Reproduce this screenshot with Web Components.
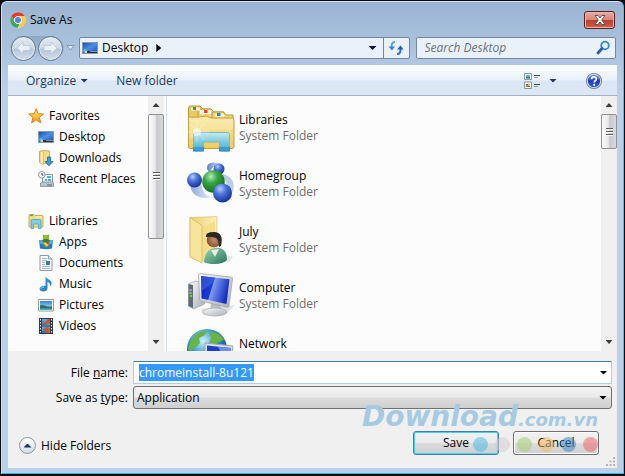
<!DOCTYPE html>
<html lang="en">
<head>
<meta charset="utf-8">
<title>Save As</title>
<style>
  html, body { margin: 0; height: 100%; }
  body {
    background: #0c0c10;
    color: #000;
    font: 12px/16px "Open Sans", "Noto Sans", sans-serif;
    overflow: hidden;
  }
</style>
</head>
<body>
<save-dialog></save-dialog>

<script>
const ICONS = {
  chrome: `<svg viewBox="0 0 48 48"><circle cx="24" cy="24" r="23" fill="#fff"/><path d="M4 12A23.500 23.500 0 0 1 44.500 12.500H24A11.500 11.500 0 0 0 13.500 28Z" fill="#e2402f"/><path d="M44.500 12.500A23.500 23.500 0 0 1 23 47.500L34 29.700A11.500 11.500 0 0 0 24 12.500Z" fill="#f9cc3c"/><path d="M4 12L14 29.700A11.500 11.500 0 0 0 30 34L23 47.500A23.500 23.500 0 0 1 4 12Z" fill="#3ba757"/><circle cx="24" cy="24" r="11.500" fill="#fff"/><circle cx="24" cy="24" r="9" fill="#4a84e4"/></svg>`,
  desktop: `<svg viewBox="0 0 16 16"><defs><linearGradient id="g" x2="1" y2="1"><stop offset="0" stop-color="#1c51ab"/><stop offset=".5" stop-color="#4f8ee6"/><stop offset="1" stop-color="#2455b0"/></linearGradient></defs><rect y="2" width="16" height="12" fill="#8e9aaa"/><rect x="1" y="3" width="14" height="9" fill="url(#g)"/><rect x="1" y="11" width="14" height="2" fill="#252d3c"/><path d="M8 11h7v1H8z" fill="#8792a0"/><circle cx="3" cy="11" r="2" fill="#49b9e8"/><path d="M3 10v1h1v-1z" fill="#9fd349"/><path d="M3 11h2v2H3z" fill="#f9d130"/><path d="M1 10h1v1H1z" fill="#e0764a"/></svg>`,
  refresh: `<svg viewBox="0 0 16 16"><path d="M7 2C4 2 3.500 4 3.600 7" fill="none" stroke="#4aa6e4" stroke-width="2"/><path d="M.500 6.500h6.500L4 10.500z" fill="#3d83d2"/><path d="M9 14c3 0 3.600-2 3.500-5" fill="none" stroke="#3273c8" stroke-width="2"/><path d="M9 9.500h6.500L12.500 5.500z" fill="#275db4"/></svg>`,
  search: `<svg viewBox="0 0 16 16"><circle cx="10" cy="5.500" r="3.800" fill="#e4f3fd" stroke="#2e8bd1" stroke-width="1.800"/><path d="M7 8.500L3 13" stroke="#275db4" stroke-width="2.800" stroke-linecap="round"/></svg>`,
  views: `<svg viewBox="0 0 16 16"><path d="M.500.500h7v6h-7zM.500 9h7v6.500h-7z" fill="#fff" stroke="#8496ae"/><path d="M2 2h4v2H2z" fill="#61b4dc"/><path d="M2 4h4v1.500H2z" fill="#237064"/><path d="M2 11h2v1.500H2z" fill="#cf3f32"/><path d="M4 10.500h2V13H4z" fill="#e9c130"/><path d="M2 12.500h2V14H2z" fill="#4f9f3d"/><path d="M4 13h2v1H4z" fill="#3a5fc5"/><path d="M10 2.500h6M10 11.500h6" stroke="#394b68"/><path d="M10 4.500h4M10 13.500h4" stroke="#8898b1"/></svg>`,
  help: `<svg viewBox="0 0 16 16"><defs><linearGradient id="g" x2="0" y2="1"><stop offset="0" stop-color="#6f94e9"/><stop offset=".5" stop-color="#1b40ba"/><stop offset="1" stop-color="#2960d6"/></linearGradient></defs><circle cx="8" cy="8" r="8" fill="#6f7a8d"/><circle cx="8" cy="8" r="7.200" fill="#dde2eb"/><circle cx="8" cy="8" r="6.200" fill="url(#g)"/><path d="M5.600 6.200C5.700 3.200 10.500 3.300 10.400 6c0 1.600-2.200 1.700-2.200 3.500" fill="none" stroke="#fff" stroke-width="1.700"/><circle cx="8.200" cy="11.800" r="1.100" fill="#fff"/></svg>`,
  star: `<svg viewBox="0 0 16 16"><defs><linearGradient id="g" x2="0" y2="1"><stop offset="0" stop-color="#fff08a"/><stop offset=".55" stop-color="#ffc338"/><stop offset="1" stop-color="#f28a1c"/></linearGradient></defs><path d="M8.200.800l1.900 5 5.400.200-4.200 3.400 1.500 5.400-4.700-3-4.500 3 1.400-5.300L.700 6l5.500-.200z" fill="url(#g)" stroke="#e17a1b" stroke-linejoin="round"/></svg>`,
  downloads: `<svg viewBox="0 0 16 16"><path d="M1.500 1.500l4-1 6 .500v12l-6 .500-4-1z" fill="#f5dc84" stroke="#d3ae50"/><path d="M5.500 2v13L2 13V1z" fill="#fbebad" stroke="#c9a548" stroke-width=".6"/><path d="M9.500 7h3v4.500h2.500L11 15.800 7 11.500h2.500z" fill="#3a9be4" stroke="#1766ae" stroke-width=".8"/></svg>`,
  recent: `<svg viewBox="0 0 16 16"><path d="M4.500 3.500h10v8h-10z" fill="#f3f6f8" stroke="#8d979f"/><path d="M2.500 12l2-1h10l1 1v3.500h-13z" fill="#bcc3c8" stroke="#848d94" stroke-width=".8"/><path d="M9 5h4v2H9zM7 8h2v2H7zM10 8h3v2h-3z" fill="#4db0d8"/><path d="M9 14h5" stroke="#5b6870"/><circle cx="3.800" cy="3.800" r="3.300" fill="#f4f7f9" stroke="#8f9ba5"/><path d="M4 2v2h1.500" fill="none" stroke="#39444d"/></svg>`,
  libraries: `<svg viewBox="0 0 16 16"><path d="M1 2.500q0-1 1-1h4l1 1h7q1 0 1 1V14H1z" fill="#f6dc80" stroke="#d1ab4a"/><path d="M2 2.500h3" stroke="#5aa743" stroke-width="1.200"/><path d="M8 4h6" stroke="#fff7d0"/><path d="M3 8q0-1.500 1.500-1.500h7Q13 6.500 13 8v7.500h-2.500V11h-5v4.500H3z" fill="#7fccec" stroke="#3f9fd1" stroke-width=".8"/></svg>`,
  apps: `<svg viewBox="0 0 16 16"><circle cx="8" cy="4" r="3.200" fill="#94bb2b"/><path d="M5 .800l1 1.500M11 .800L10 2.300" stroke="#6f941b"/><path d="M1 6h14l-1 8.500Q8 16 2 14.500z" fill="#2d78b8"/><path d="M1 6h14l-.400 3.500Q8 11.500 1.400 9.500z" fill="#5aa9dc"/><path d="M4 6.500c1-2 7-2 8 0l-2 2H6z" fill="#3e7d2b"/><path d="M5.500 9.500L8 8l3 3-2.500 2z" fill="#efcc26"/><path d="M7.500 8.500l3-1v3z" fill="#c43b34"/><path d="M6 11l2 2" stroke="#54ad3c" stroke-width="1.500"/></svg>`,
  documents: `<svg viewBox="0 0 16 16"><path d="M2 .500h8.500L14 4v11.500H2z" fill="#fbfcfd" stroke="#8d9aa8"/><path d="M10.500.500V4H14" fill="#dbe5ee" stroke="#8d9aa8"/><path d="M4 3.500h5M4 5.500h5M4 7.500h3M4 9.500h3M4 11.500h8M4 13.500h8" stroke="#a4b5c8"/><path d="M8 6h4v4H8z" fill="#2f74b8"/><path d="M8 8.500h4V10H8z" fill="#3b927c"/></svg>`,
  music: `<svg viewBox="0 0 16 16"><defs><linearGradient id="g" x2="1" y2="1"><stop offset="0" stop-color="#4bb5f0"/><stop offset="1" stop-color="#1866b5"/></linearGradient></defs><path d="M7.500.500C9 3.500 14 4 13.500 7.500c0 1-.600 2-1.500 3 .600-3-1-4-2.500-4.500V12c0 2-1.500 3.500-4 3.500C3 15.500 1.500 14.500 1.500 13c0-2.500 3.500-4 6-3z" fill="url(#g)"/><path d="M3 12.500c.500-1 1.500-1.500 3-1.600" stroke="#9bdbfa" fill="none"/></svg>`,
  pictures: `<svg viewBox="0 0 16 16"><defs><linearGradient id="g" x2="0" y2="1"><stop offset="0" stop-color="#2f85cc"/><stop offset="1" stop-color="#c4ecf4"/></linearGradient></defs><path d="M.500 2.500h15v11.500H.500z" fill="#fff" stroke="#8d99a6"/><path d="M2 4h12v8.500H2z" fill="url(#g)"/><path d="M2 8.500c3-2 5 1.500 12 1v3H2z" fill="#24735b"/><path d="M2 11.300h12v1.200H2z" fill="#3b9fc4"/></svg>`,
  videos: `<svg viewBox="0 0 16 16"><path d="M1 0h14v16H1z" fill="#303a46"/><path d="M4 1h8v6.500H4zM4 8.500h8V15H4z" fill="#62a7dc"/><path d="M4 3l3 1 3-3h2v4l-4 2.500H6zM5 11l4-2.500 3 2-1 4.500H7z" fill="#bd5c3c"/><path d="M4 6l3-1 2 2.500H4zM4 13l3-1 1 3H4z" fill="#3a78b8"/><path d="M2.500 1v15M13.500 1v15" stroke="#e7edf1" stroke-dasharray="1.500 1.500"/></svg>`,
  librariesLarge: `<svg viewBox="0 0 48 48"><defs><linearGradient id="g" x2="0" y2="1"><stop offset="0" stop-color="#f9e9a1"/><stop offset="1" stop-color="#eecb5c"/></linearGradient><linearGradient id="b" x2="0" y2="1"><stop offset="0" stop-color="#c5ecf4"/><stop offset=".5" stop-color="#74cbe8"/><stop offset="1" stop-color="#3ba6da"/></linearGradient></defs><path d="M1.500 43V4Q1.500 2 3.500 2H13l3 3h7v38z" fill="#e9c963" stroke="#bd9440"/><path d="M11 7q0-2 2-2h11l3 3h10v8H11z" fill="#efd577" stroke="#bd9440"/><path d="M13 6h11v4H13z" fill="#fff9df"/><path d="M25 10q0-2 2-2h9l3 3h7v8H25z" fill="#efd577" stroke="#bd9440"/><path d="M4 3.500h9v3H4zM28 9.500h8l2 3H28z" fill="#fff9df"/><path d="M6 3h3v3H6z" fill="#3b9b42"/><path d="M17 6h3.500v3H17z" fill="#df482d"/><path d="M30 9h3.500v3H30z" fill="#2f86cc"/><path d="M1.500 13q8 1 18-1l5 2h21q1.500 0 1.500 2v27q0 1.500-2 1.500H3.500q-2 0-2-2z" fill="url(#g)" stroke="#c59d43"/><path d="M2 35Q16 24 46 26V15H25l-5-2Q12 15 2 14z" fill="#fff" opacity=".18"/><path d="M6.500 47V31q0-2.500 2.500-2.500h31q2.500 0 2.500 2.500v16h-10v-9h-16v9z" fill="url(#b)" stroke="#6bb9d8" opacity=".92"/><path d="M6.500 43v4h10v-4M32.500 43v4h10v-4" fill="#3a9ed6" stroke="#318bc3"/><path d="M10 16v22M0 28h22M3 20l14 15M17 20L4 35" stroke="#fff" stroke-width=".8" opacity=".5"/><circle cx="10" cy="28" r="4" fill="#fff" opacity=".55"/></svg>`,
  homegroup: `<svg viewBox="0 0 48 48"><defs><radialGradient id="b" cx=".38" cy=".28" r=".75"><stop offset="0" stop-color="#b5cdf8"/><stop offset=".4" stop-color="#4d75d8"/><stop offset="1" stop-color="#132f96"/></radialGradient><radialGradient id="g" cx=".38" cy=".28" r=".75"><stop offset="0" stop-color="#b8eab4"/><stop offset=".4" stop-color="#35a541"/><stop offset="1" stop-color="#0f6a20"/></radialGradient><linearGradient id="s" x2="1"><stop offset="0" stop-color="#5b81c9"/><stop offset="1" stop-color="#e8effa"/></linearGradient></defs><path d="M20 9Q19 2 28 2.500l7 1.500Q25 4 23 13z" fill="url(#s)"/><path d="M3 24q1 16 23 14-10-2-12-14z" fill="url(#s)" opacity=".7"/><path d="M36 14q13 3 10 17-3 4-6 2 2-10-4-15z" fill="#a9c2e6" opacity=".8"/><circle cx="32" cy="9" r="5.500" fill="url(#b)"/><circle cx="7.500" cy="20" r="7.500" fill="url(#b)"/><circle cx="26.500" cy="21.500" r="11.300" fill="url(#g)"/><circle cx="35.500" cy="33" r="9.500" fill="url(#b)"/></svg>`,
  user: `<svg viewBox="0 0 48 48"><defs><linearGradient id="g" x2="1" y2="0"><stop offset="0" stop-color="#eecf70"/><stop offset="1" stop-color="#fbf0ba"/></linearGradient><radialGradient id="h"><stop offset="0" stop-color="#c58e68"/><stop offset="1" stop-color="#86543a"/></radialGradient><linearGradient id="b" x2="1" y2="1"><stop offset="0" stop-color="#9bd8b7"/><stop offset="1" stop-color="#25725a"/></linearGradient></defs><path d="M12 38l34 2-4 6-24 1z" fill="#8b8b8b" opacity=".2"/><path d="M3 1.500L30 .500v37L14 46 3 41z" fill="url(#g)" stroke="#dfc273" stroke-width=".7"/><path d="M15 12L28 5v36l-13 5z" fill="#f5de8b"/><path d="M3 1.500l12 8V47L3 40.500z" fill="#f8e59c" stroke="#d3b35c" stroke-width=".7"/><path d="M17 46q1-13 11-14h5q7 2 7 12-4 4-12 4-8 0-11-2z" fill="url(#b)"/><path d="M24 34l4 7 4-8z" fill="#efe9dc"/><circle cx="27" cy="24" r="7.300" fill="url(#h)"/><path d="M19 21q-1-5 8-5 10 0 7 14l-2 1q0-7-3-9-5-2-10-1z" fill="#2c2726"/></svg>`,
  computer: `<svg viewBox="0 0 48 48"><defs><linearGradient id="g" x2="1" y2=".3"><stop offset="0" stop-color="#0b20a8"/><stop offset=".45" stop-color="#1b3cde"/><stop offset=".48" stop-color="#7f9cee"/><stop offset="1" stop-color="#1730c4"/></linearGradient><linearGradient id="m" x2="1" y2="1"><stop offset="0" stop-color="#fafbfb"/><stop offset="1" stop-color="#a9afb6"/></linearGradient></defs><path d="M14 37l34-4-8 8-24 2z" fill="#777" opacity=".2"/><path d="M1.500 12l7-3 9 3v20l-11 5-5-3z" fill="url(#m)" stroke="#a3a9ad" stroke-width=".8"/><path d="M1.500 12l4.500 1v23l-4.500-2z" fill="#606a72"/><path d="M2 18h3M2 21h3" stroke="#c2cbd0"/><circle cx="4" cy="24" r="1.300" fill="#68d23b"/><path d="M24 31l9 1 2 8H23z" fill="#b9bec3"/><ellipse cx="28" cy="40" rx="12" ry="4" fill="url(#m)" stroke="#a4aaaf" stroke-width=".7"/><path d="M11.500 3Q12 1.500 14 1.600L44 5q2 .300 1.500 2L42 34q-.300 1.500-2 1.300L14 29q-1.500-.500-1.500-2z" fill="url(#m)" stroke="#9da4aa" stroke-width=".8"/><path d="M14 4l28.500 3.300L39.500 32 14.500 26.500z" fill="url(#g)"/><path d="M14 4l15 1.700Q24 14 14.500 19z" fill="#4b6ce2" opacity=".55"/></svg>`,
  network: `<svg viewBox="0 0 48 48"><defs><radialGradient id="g" cx=".4" cy=".3" r=".7"><stop offset="0" stop-color="#cdf3fb"/><stop offset=".5" stop-color="#3394d6"/><stop offset="1" stop-color="#0a3a92"/></radialGradient></defs><circle cx="20" cy="21" r="20" fill="url(#g)"/><path d="M3 14Q9 3 20 2l-2 5-6 3 1 5-5 5-5 3-2-2zM5 27l7-2 5 5-1 10Q7 36 5 27zM22 4q10-1 15 8l-7 3-2 4-6-3 2-6z" fill="#66b545"/><path d="M18 15l28 3-3 22-25-4z" fill="#dfe3e8" stroke="#9ba4ae"/><path d="M20 17.500l24 2.500-3 18-21-4z" fill="#1c3ecb"/><path d="M31 18.700l13 1.300-3 18z" fill="#6b8ce8"/></svg>`
};

const define = (name, css, html, setup) => {
  const template = document.createElement('template');
  template.innerHTML = `<style>*,*::before{box-sizing:border-box}button,input,select{font:inherit;color:inherit;margin:0}button{cursor:default}${css}</style>${html}`;
  customElements.define(name, class extends HTMLElement {
    constructor() {
      super();
      this.attachShadow({ mode: 'open' }).append(template.content.cloneNode(true));
    }
    connectedCallback() { if (setup) setup(this, this.shadowRoot); }
  });
};

customElements.define('win-icon', class extends HTMLElement {
  static observedAttributes = ['name'];
  constructor() {
    super();
    this.attachShadow({ mode: 'open' });
  }
  attributeChangedCallback() {
    this.shadowRoot.innerHTML = `<style>
      :host{display:block;flex:none;width:16px;height:16px}
      :host([size="large"]){width:48px;height:48px}
      svg{display:block;width:100%;height:100%}</style>${ICONS[this.getAttribute('name')] || ''}`;
  }
});

define('caret-mark',
  `:host{display:block;flex:none;width:8px;height:4px;background:currentColor;clip-path:polygon(0 0,100% 0,50% 100%)}
   :host([direction="up"]){clip-path:polygon(0 100%,100% 100%,50% 0)}
   :host([direction="right"]){width:5px;height:8px;clip-path:polygon(0 0,100% 50%,0 100%)}`, ``);

define('title-bar',
  `:host{display:flex;align-items:center;gap:4px;padding:7px 2px 5px;height:33px;box-sizing:border-box}
   h1{flex:1;margin:0;font:inherit}
   button{width:31px;height:18px;padding:0;display:grid;place-items:center;border:1px solid #5b1e22;border-radius:3px;
     background:linear-gradient(#e5aca0,#d8887a 48%,#bd402b 52%,#cc6149);box-shadow:inset 0 0 0 1px #f0b8ac}
   svg{width:12px;height:10px}`,
  `<win-icon name="chrome"></win-icon><h1><slot></slot></h1>
   <button aria-label="Close"><svg viewBox="0 0 12 10"><path d="M1 .500h3l2 2.500L8 .500h3L7.700 5l3.300 4.500H8L6 7 4 9.500H1L4.300 5z" fill="#fff" stroke="#54444b" stroke-width=".9"/></svg></button>`);

define('history-buttons',
  `:host{display:flex;align-items:center;width:67px;height:26px}
   .pair{display:flex;gap:2px;border-radius:13px;padding:0 1px;background:linear-gradient(#8fa8c5,#b3c7dd)}
   button{width:25px;height:25px;padding:0;border:1px solid #62788f;border-radius:50%;display:grid;place-items:center;
     background:linear-gradient(#e4ecf5,#ccd9e7 48%,#b4c6da 52%,#d3e0ec);box-shadow:inset 0 0 0 1px #e6eef6}
   button svg{width:15px;height:14px}
   .menu{width:12px;height:12px;border:0;background:none;box-shadow:none;border-radius:0}
   .menu svg{width:9px;height:6px}`,
  `<div class="pair">
     <button aria-label="Back"><svg viewBox="0 0 15 14"><path d="M7 1L1 7l6 6V9.500h7v-5H7z" fill="#e9f0f6" stroke="#b5c3d2" stroke-width=".7"/></svg></button>
     <button aria-label="Forward"><svg viewBox="0 0 15 14"><path d="M8 1l6 6-6 6V9.500H1v-5h7z" fill="#e9f0f6" stroke="#b5c3d2" stroke-width=".7"/></svg></button>
   </div>
   <button class="menu" aria-label="Recent locations"><svg viewBox="0 0 9 6"><path d="M.800.500h7.400L4.500 5z" fill="#d9e5f1" stroke="#8298b4"/></svg></button>`);

define('address-bar',
  `:host{display:flex;min-width:0;height:22px;box-sizing:border-box;border:1px solid #74879d;border-radius:2px;background:#e9f1fa}
   .path{display:flex;align-items:center;gap:4px;flex:1;padding-left:2px;min-width:0}
   .path caret-mark{margin-left:4px}
   button{border:0;padding:0;background:none;display:grid;place-items:center;width:20px;color:#0b1145}
   .refresh{width:26px;border-left:1px solid #74879d}`,
  `<div class="path"><win-icon name="desktop"></win-icon><slot></slot><caret-mark direction="right"></caret-mark></div>
   <button aria-label="Previous locations"><caret-mark></caret-mark></button>
   <button class="refresh" aria-label="Refresh"><win-icon name="refresh"></win-icon></button>`);

define('search-box',
  `:host{display:flex;align-items:center;min-width:0;height:22px;box-sizing:border-box;border:1px solid #74879d;border-radius:2px;background:#e9f1fa;padding:0 4px 0 8px}
   input{flex:1;min-width:0;border:0;padding:0;background:none;outline:0}
   input::placeholder{color:#6d7279;font-style:italic;opacity:1}`,
  `<input type="search" aria-label="Search Desktop" placeholder="Search Desktop"><win-icon name="search"></win-icon>`);

define('tool-bar',
  `:host{display:flex;align-items:center;height:31px;box-sizing:border-box;padding:0 15px 0 18px;color:#1e395b;border-top:1px solid #fff;
     border-bottom:1px solid #a0afc3;background:linear-gradient(#fbfdff,#e9f1fb 48%,#dbe6f4 52%,#dde8f6)}
   button{border:0;background:none;padding:0;display:flex;align-items:center;gap:4px}
   .new{margin-left:28px}
   .views{margin-left:auto;gap:9px}
   .help{margin-left:29px}`,
  `<button>Organize <caret-mark></caret-mark></button>
   <button class="new">New folder</button>
   <button class="views" aria-label="Change your view"><win-icon name="views"></win-icon><caret-mark></caret-mark></button>
   <button class="help" aria-label="Help"><win-icon name="help"></win-icon></button>`);

define('scroll-strip',
  `:host{display:flex;flex-direction:column;flex:none;width:16px;background:#f0f0f0;color:#3c3c3c}
   button{height:18px;border:0;padding:0;background:none;display:grid;place-items:center;flex:none}
   caret-mark{width:7px}
   .track{flex:1;min-height:0}
   .thumb{height:var(--thumb);border:1px solid #8f9194;border-radius:2px;background:linear-gradient(90deg,#fbfbfb,#e8e8ea 45%,#c7c8cc 55%,#d9dadd);
     display:grid;place-items:center}
   .grip{width:7px;height:8px;background:repeating-linear-gradient(#5a5c60 0 1px,#fff 1px 2px,transparent 2px 3px)}`,
  `<button aria-label="Scroll up"><caret-mark direction="up"></caret-mark></button>
   <div class="track"><div class="thumb"><div class="grip"></div></div></div>
   <button aria-label="Scroll down"><caret-mark></caret-mark></button>`);

define('nav-item',
  `:host{display:block;padding-left:10px}
   :host([level="top"]){padding-left:0}
   a{display:flex;align-items:center;gap:5px;height:21px;color:inherit;text-decoration:none;white-space:nowrap}`,
  `<a href="#"><win-icon></win-icon><slot></slot></a>`,
  (el, root) => root.querySelector('win-icon').setAttribute('name', el.getAttribute('icon')));

define('nav-pane',
  `:host{display:flex;flex:none;width:159px;box-sizing:border-box;padding-right:2px;border-right:1px solid #cfe0f3;min-height:0}
   nav{flex:1;display:flex;flex-direction:column;gap:21px;padding:9px 0 0 20px;overflow:hidden}
   scroll-strip{--thumb:57%}`,
  `<nav aria-label="Places">
    <div><nav-item level="top" icon="star">Favorites</nav-item><nav-item icon="desktop">Desktop</nav-item><nav-item icon="downloads">Downloads</nav-item><nav-item icon="recent">Recent Places</nav-item></div>
    <div><nav-item level="top" icon="libraries">Libraries</nav-item><nav-item icon="apps">Apps</nav-item><nav-item icon="documents">Documents</nav-item><nav-item icon="music">Music</nav-item><nav-item icon="pictures">Pictures</nav-item><nav-item icon="videos">Videos</nav-item></div>
   </nav><scroll-strip></scroll-strip>`);

define('folder-item',
  `:host{display:flex;align-items:flex-start;gap:4px;height:56px;flex:none;box-sizing:border-box;padding-top:4px}
   div{padding-top:8px}
   ::slotted(small){display:block;font:inherit;color:#6d6d6d}`,
  `<win-icon size="large"></win-icon><div><slot></slot></div>`,
  (el, root) => root.querySelector('win-icon').setAttribute('name', el.getAttribute('icon')));

define('file-pane',
  `:host{display:flex;flex:1;min-width:0;min-height:0}
   .items{flex:1;min-width:0;display:flex;flex-direction:column;overflow:hidden;padding:4px 0 0 20px}
   scroll-strip{--thumb:16%}`,
  `<div class="items"><folder-item icon="librariesLarge">Libraries<small>System Folder</small></folder-item><folder-item icon="homegroup">Homegroup<small>System Folder</small></folder-item><folder-item icon="user">July<small>System Folder</small></folder-item><folder-item icon="computer">Computer<small>System Folder</small></folder-item><folder-item icon="network">Network</folder-item></div><scroll-strip></scroll-strip>`);

define('water-mark',
  `:host{display:block;pointer-events:none;font-family:"DejaVu Sans",sans-serif;font-weight:bold;font-style:oblique;line-height:28px;color:#a6cae2;font-size:18px;white-space:nowrap}
   .name{font-size:28px}
   .dots{display:flex;gap:7px;justify-content:flex-end;padding-top:3px}
   i{width:15px;height:15px;border-radius:50%;background:var(--c);opacity:.55}`,
  `<div><span class="name">Download</span>.com.vn</div>
   <div class="dots"><i style="--c:#4cbbe8"></i><i style="--c:#cfcfcf"></i><i style="--c:#a5ce72"></i><i style="--c:#f5bb62"></i><i style="--c:#3f8bcb"></i><i style="--c:#ef6570"></i></div>`);

define('save-form',
  `:host{display:block;background:#f0f0f0;position:relative;padding:10px 5px 13px 8px}
   .fields{display:grid;grid-template-columns:112px 1fr;column-gap:5px;row-gap:2px;align-items:center}
   label{text-align:right}
   .combo{display:grid;align-items:center;height:23px}
   .combo > *{grid-area:1/1}
   .combo button{justify-self:end;width:17px;height:21px;border:0;padding:0;background:none;display:grid;place-items:center}
   .combo caret-mark{justify-self:end;margin-right:5px;pointer-events:none}
   .combo button caret-mark{margin:0;justify-self:center}
   input,select{width:100%;height:23px;outline:0}
   input{border:1px solid #a9cfe9;border-top-color:#3d7bad;border-radius:1px;background:#fff;padding:0 18px 1px 5px}
   input::selection{background:#3399ff;color:#fff}
   select{appearance:none;border:1px solid #707070;border-radius:3px;padding:0 18px 0 3px;background:linear-gradient(#f2f2f2,#ebebeb 48%,#dcdcdc 52%,#cfcfcf)}
   .actions{display:flex;align-items:center;gap:14px;margin-top:22px;padding:0 13px 0 3px}
   .hide{margin-right:auto;display:flex;align-items:center;gap:5px;border:0;background:none;padding:5px 0 0}
   .ring{width:17px;height:17px;border:1px solid #8a94a8;border-radius:50%;display:grid;place-items:center;background:linear-gradient(#fff,#d4dae4);color:#1d3268}
   .push{width:86px;height:24px;padding:0;border:1px solid #707070;border-radius:3px;background:linear-gradient(#f2f2f2,#ebebeb 48%,#dcdcdc 52%,#cfcfcf);box-shadow:inset 0 0 0 1px #fbfbfb}
   .push.main{border-color:#3c7fb1;box-shadow:inset 0 0 0 1px #44d3f4}
   water-mark{position:absolute;right:19px;bottom:16px}
   .size{position:absolute;right:2px;bottom:2px;width:9px;height:9px}`,
  `<div class="fields">
     <label for="name">File <u>n</u>ame:</label>
     <div class="combo"><input id="name" type="text" value="chromeinstall-8u121" spellcheck="false"><button aria-label="Previous names"><caret-mark></caret-mark></button></div>
     <label for="type">Save as <u>t</u>ype:</label>
     <div class="combo"><select id="type"><option>Application</option></select><caret-mark></caret-mark></div>
   </div>
   <div class="actions"><button class="hide"><span class="ring"><caret-mark direction="up"></caret-mark></span>Hide Folders</button><button class="push main">Save</button><button class="push">Cancel</button></div>
   <water-mark></water-mark>
   <svg class="size" viewBox="0 0 9 9" fill="#b4b4b4"><path d="M7 0h2v2H7zM7 3.500h2v2H7zM3.500 3.500h2v2h-2zM7 7h2v2H7zM3.500 7h2v2h-2zM0 7h2v2H0z"/></svg>`,
  (el, root) => { const input = root.getElementById('name'); input.focus({ preventScroll: true }); input.select(); });

define('save-dialog',
  `:host{display:flex;flex-direction:column;height:100%;padding:1px 1px 2px;box-sizing:border-box}
   .frame{flex:1;min-height:0;display:flex;flex-direction:column;padding:0 6px 5px;border:1px solid #d3e4f5;border-right-color:#4cc4e4;border-bottom-color:#35b8dc;
     border-radius:6px 6px 0 0;background:linear-gradient(#9bb4d2,#b9d1ea 90px)}
   .nav{display:grid;grid-template-columns:auto 329fr 202fr;column-gap:6px;padding:0 1px 0 2px;margin-bottom:4px;align-items:center}
   address-bar{margin-left:-4px}
   .panes{flex:1;min-height:0;display:flex;background:#fcfcfc}`,
  `<div class="frame">
    <title-bar>Save As</title-bar>
    <div class="nav"><history-buttons></history-buttons><address-bar>Desktop</address-bar><search-box></search-box></div>
    <tool-bar></tool-bar>
    <div class="panes"><nav-pane></nav-pane><file-pane></file-pane></div>
    <save-form></save-form>
   </div>`);
</script>
</body>
</html>
